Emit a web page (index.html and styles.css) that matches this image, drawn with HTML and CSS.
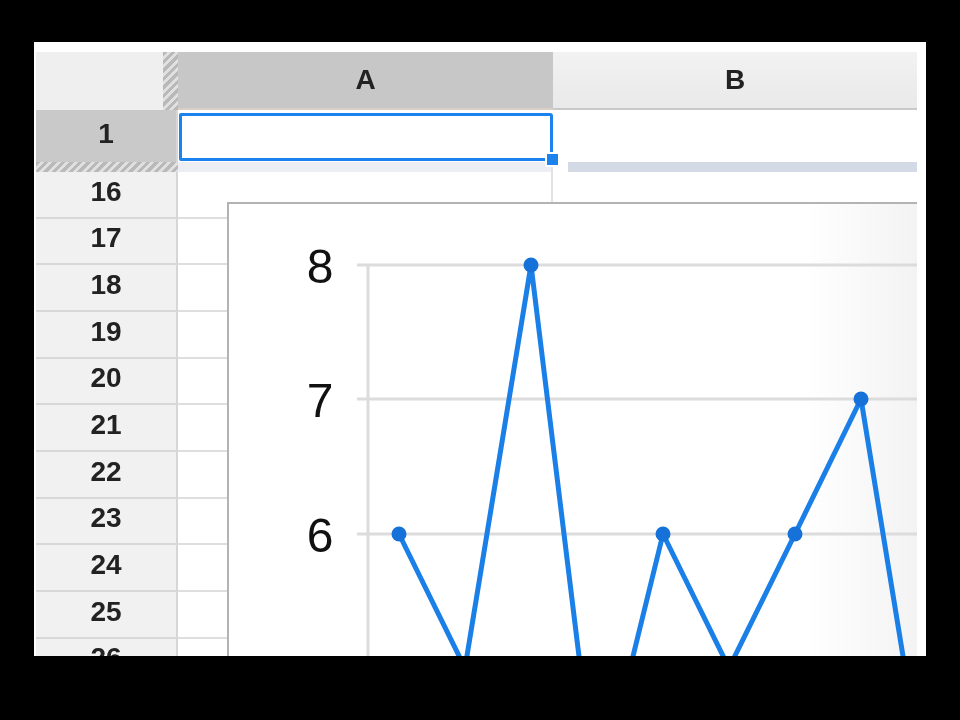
FILE: index.html
```html
<!DOCTYPE html>
<html lang="en">
<head>
  <meta charset="UTF-8" />
  <title>Sheet with chart</title>
  <link rel="stylesheet" href="styles.css">
</head>
<body>

  <div class="frame">
    <div class="sheet">
      <!-- column headers -->
      <div class="corner"></div>
      <div class="col-grip"></div>
      <div class="col-head is-active">A</div>
      <div class="col-head">B</div>

      <!-- frozen row 1 -->
      <div class="row-head is-active">1</div>
      <div class="cell cell-a1">
        <div class="selection"></div>
        <span class="fill-handle"></span>
      </div>
      <div class="cell cell-b1"></div>

      <!-- freeze bar -->
      <div class="row-grip"></div>
      <div class="freeze freeze-a"></div>
      <div class="freeze freeze-b"></div>

      <div class="row-head">16</div><div class="cell"></div><div class="cell"></div>
      <div class="row-head">17</div><div class="cell"></div><div class="cell"></div>
      <div class="row-head">18</div><div class="cell"></div><div class="cell"></div>
      <div class="row-head">19</div><div class="cell"></div><div class="cell"></div>
      <div class="row-head">20</div><div class="cell"></div><div class="cell"></div>
      <div class="row-head">21</div><div class="cell"></div><div class="cell"></div>
      <div class="row-head">22</div><div class="cell"></div><div class="cell"></div>
      <div class="row-head">23</div><div class="cell"></div><div class="cell"></div>
      <div class="row-head">24</div><div class="cell"></div><div class="cell"></div>
      <div class="row-head">25</div><div class="cell"></div><div class="cell"></div>
      <div class="row-head">26</div><div class="cell"></div><div class="cell"></div>

      <!-- floating chart -->
      <div class="chart">
        <svg width="720" height="470" viewBox="0 0 720 470">
          <g class="grid">
            <line x1="128" y1="61" x2="720" y2="61"/>
            <line x1="128" y1="195" x2="720" y2="195"/>
            <line x1="128" y1="330" x2="720" y2="330"/>
            <line x1="139" y1="61" x2="139" y2="470"/>
          </g>
          <g class="labels">
            <text x="91" y="79">8</text>
            <text x="91" y="213">7</text>
            <text x="91" y="348">6</text>
          </g>
          <polyline class="series" points="170,330 236,464 302,61 368,599 434,330 500,464 566,330 632,195 698,599"/>
          <g class="marks">
            <circle cx="170" cy="330" r="7.5"/>
            <circle cx="302" cy="61" r="7.5"/>
            <circle cx="434" cy="330" r="7.5"/>
            <circle cx="566" cy="330" r="7.5"/>
            <circle cx="632" cy="195" r="7.5"/>
          </g>
        </svg>
      </div>
    </div>
  </div>

</body>
</html>
```

FILE: styles.css
```css
body {
  margin: 0;
  height: 720px;
  overflow: hidden;
  background-color: #000;
  font-family: "Liberation Sans", Arial, sans-serif;
}
.frame {
  box-sizing: border-box;
  width: 892px;
  height: 614px;
  margin: 42px 0 0 34px;
  padding: 10px 9px 0 2px;
  background-color: #fff;
  overflow: hidden;
  filter: blur(0.5px);
}
.sheet {
  position: relative;
  height: 604px;
  overflow: hidden;
  display: grid;
  grid-template-columns: 127px 15px 375px 364px;
  grid-template-rows: 58px 52px 10px repeat(11, 46.67px);
  color: #222;
}
.corner {
  background-color: #efefef;
}
.col-grip,
.row-grip {
  background: repeating-linear-gradient(135deg, #b9b9b9 0 3px, #e0e0e0 3px 6px);
}
.row-grip {
  grid-column: 1 / 3;
}
.col-head {
  display: flex;
  align-items: center;
  justify-content: center;
  font-size: 28px;
  font-weight: bold;
  background: linear-gradient(#f2f2f2, #e9e9e9);
  border-bottom: 2px solid #c9c9c9;
}
.col-head.is-active {
  background: #c7c7c7;
  border-bottom-color: #d9cfc4;
}
.row-head {
  grid-column: 1 / 3;
  box-sizing: border-box;
  display: flex;
  align-items: center;
  justify-content: center;
  padding-bottom: 5px;
  font-size: 28px;
  font-weight: bold;
  background-color: #f1f1f1;
  border-bottom: 2px solid #d8d8d8;
  border-right: 2px solid #d6d6d6;
}
.row-head.is-active {
  background-color: #c9c9c9;
  border-bottom: none;
}
.cell {
  box-sizing: border-box;
  border-bottom: 2px solid #dedede;
  border-right: 2px solid #e2e2e2;
}
.cell + .cell {
  border-right: none;
}
.cell-a1,
.cell-b1 {
  border-bottom: none;
}
.cell-a1 {
  position: relative;
  padding: 3px 0 0 1px;
  border-right: none;
}
.selection {
  box-sizing: border-box;
  height: 48px;
  border: 3px solid #1b82ee;
  border-radius: 2px 3px 0 2px;
}
.fill-handle {
  position: absolute;
  right: -7px;
  bottom: -5px;
  width: 11px;
  height: 11px;
  background-color: #1b82ee;
  border: 2px solid #fff;
}
.freeze-a {
  background-color: #eceef3;
  border-right: 2px solid #e2e2e2;
}
.freeze-b {
  background-color: #d4dae5;
  margin-left: 15px;
}
.chart {
  position: absolute;
  left: 191px;
  top: 150px;
  width: 720px;
  height: 470px;
  border-top: 2px solid #b3b3b3;
  border-left: 2px solid #b3b3b3;
  background: linear-gradient(90deg, #fff 80%, #f1f1f1 98%);
}
.chart svg {
  display: block;
}
.grid line {
  stroke: #dcdcdc;
  stroke-width: 3;
}
.labels text {
  font-family: "Liberation Sans", Arial, sans-serif;
  font-size: 48px;
  fill: #111;
  text-anchor: middle;
}
.series {
  fill: none;
  stroke: #1a7fe6;
  stroke-width: 5;
  stroke-linejoin: round;
}
.marks circle {
  fill: #1672d8;
}
```
